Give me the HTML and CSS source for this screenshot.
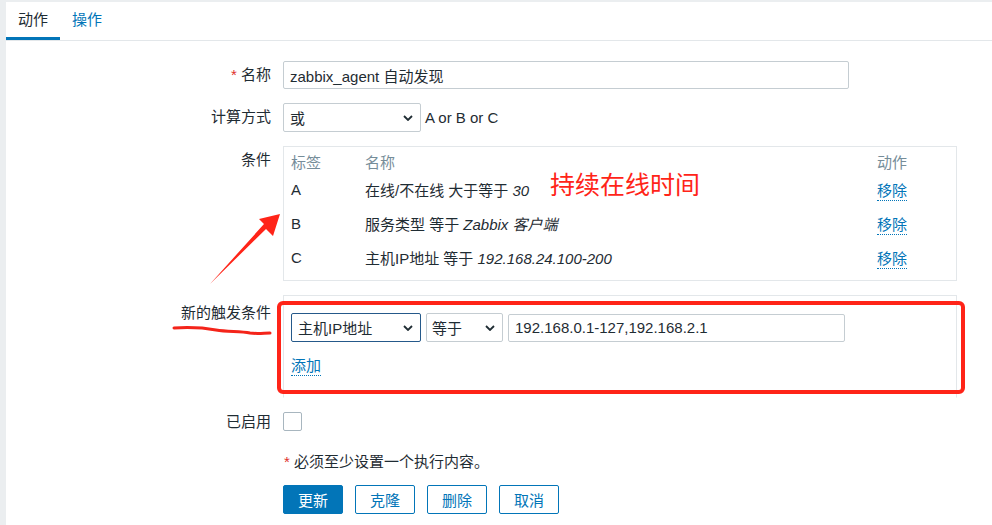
FILE: index.html
```html
<!DOCTYPE html>
<html lang="zh">
<head>
  <meta charset="UTF-8" />
  <title>自动发现动作</title>
  <link rel="stylesheet" href="styles.css">
</head>
<body>

  <div class="panel">
    <div class="tabs">
      <div class="tab active">动作</div>
      <div class="tab">操作</div>
    </div>

    <div class="form">
      <div class="label"><span class="req">*</span> 名称</div>
      <div class="field">
        <div class="input name">zabbix_agent 自动发现</div>
      </div>

      <div class="label">计算方式</div>
      <div class="field inline">
        <div class="select calc">或<svg class="chev" width="10" height="6" viewBox="0 0 10 6"><path d="M1 1l4 4 4-4" /></svg></div>
        <span class="expr">A or B or C</span>
      </div>

      <div class="label">条件</div>
      <div class="field">
        <div class="box conditions">
          <table>
            <tr class="head">
              <td class="c1">标签</td>
              <td class="c2">名称</td>
              <td class="c3">动作</td>
            </tr>
            <tr>
              <td>A</td>
              <td>在线/不在线 大于等于 <i>30</i></td>
              <td><a class="link">移除</a></td>
            </tr>
            <tr>
              <td>B</td>
              <td>服务类型 等于 <i>Zabbix 客户端</i></td>
              <td><a class="link">移除</a></td>
            </tr>
            <tr>
              <td>C</td>
              <td>主机IP地址 等于 <i>192.168.24.100-200</i></td>
              <td><a class="link">移除</a></td>
            </tr>
          </table>
        </div>
      </div>

      <div class="label new-label">新的触发条件</div>
      <div class="field">
        <div class="box new-cond">
          <div class="inline">
            <div class="select type focus">主机IP地址<svg class="chev" width="10" height="6" viewBox="0 0 10 6"><path d="M1 1l4 4 4-4" /></svg></div>
            <div class="select op">等于<svg class="chev" width="10" height="6" viewBox="0 0 10 6"><path d="M1 1l4 4 4-4" /></svg></div>
            <div class="input value">192.168.0.1-127,192.168.2.1</div>
          </div>
          <div class="add"><a class="link">添加</a></div>
        </div>
      </div>

      <div class="label mid">已启用</div>
      <div class="field">
        <div class="checkbox"></div>
      </div>

      <div class="field footer">
        <div class="note"><span class="req">*</span> 必须至少设置一个执行内容。</div>
        <div class="buttons">
          <button class="btn main">更新</button>
          <button class="btn">克隆</button>
          <button class="btn">删除</button>
          <button class="btn">取消</button>
        </div>
      </div>
    </div>
  </div>

  <!-- пометки поверх скриншота -->
  <svg class="marks" width="992" height="525" viewBox="0 0 992 525">
    <text x="550" y="194" class="note-red">持续在线时间</text>
    <path class="arrow" d="M210 284 L266 229 L273 236 L280 214 L259 219 L264 224 Z" />
    <path class="scribble" d="M174 328 C190 327 205 328 216 330 C228 332 240 331 250 333 C258 334 264 333 270 333" />
    <rect class="frame" x="279" y="303" width="684" height="89" rx="4" />
  </svg>

</body>
</html>
```

FILE: styles.css
```css
html, body {
  margin: 0;
  padding: 0;
  height: 100%;
}
body {
  position: relative;
  background: #ebeef0;
  font-family: "Liberation Sans", "Noto Sans CJK SC", sans-serif;
  font-size: 15px;
  color: #1f2c33;
  overflow: hidden;
}
.panel {
  margin: 2px 0 0 6px;
  background: #fff;
  height: calc(100% - 2px);
}
.tabs {
  display: flex;
  height: 38px;
  border-bottom: 1px solid #e3e7ea;
}
.tab {
  padding: 0 12px;
  line-height: 35px;
  border-bottom: 3px solid transparent;
  color: #0275b8;
}
.tab.active {
  color: #1f2c33;
  border-bottom-color: #0275b8;
}
.form {
  display: grid;
  grid-template-columns: 265px 674px;
  column-gap: 12px;
  row-gap: 14px;
  padding-top: 20px;
}
.label {
  text-align: right;
  line-height: 28px;
}
.label.new-label {
  padding-top: 4px;
}
.label.mid {
  align-self: center;
  line-height: 20px;
}
.req {
  color: #e0302b;
}
.inline {
  display: flex;
  align-items: center;
}
.input, .select {
  box-sizing: border-box;
  border: 1px solid #c5cdd2;
  border-radius: 2px;
  padding: 0 7px 0 6px;
  display: flex;
  align-items: center;
  background: #fff;
}
.input.name {
  width: 566px;
  height: 28px;
}
.select {
  justify-content: space-between;
  height: 29px;
}
.select.calc {
  width: 138px;
}
.select.type {
  width: 130px;
}
.select.op {
  width: 77px;
  margin-left: 5px;
  padding-left: 5px;
}
.select.focus {
  border-color: #25598a;
}
.chev {
  fill: none;
  stroke: #1f2c33;
  stroke-width: 1.8;
}
.expr {
  margin-left: 4px;
}
.input.value {
  width: 337px;
  height: 28px;
  margin-left: 5px;
}
.box {
  box-sizing: border-box;
  border: 1px solid #e3e7ea;
}
.conditions {
  height: 135px;
  padding: 3px 8px 0 7px;
}
.conditions table {
  width: 100%;
  border-collapse: collapse;
}
.conditions td {
  padding: 0;
  height: 34px;
  vertical-align: middle;
}
.conditions .head td {
  height: 22px;
  color: #768d99;
}
.conditions .c1 {
  width: 74px;
}
.conditions .c3 {
  width: 71px;
}
.link {
  color: #0275b8;
  border-bottom: 1px dotted #0275b8;
  padding-bottom: 1px;
}
.new-cond {
  height: 103px;
  padding: 17px 8px 0 7px;
  border-bottom-color: transparent;
}
.add {
  margin-top: 14px;
  line-height: 20px;
}
.checkbox {
  width: 19px;
  height: 19px;
  box-sizing: border-box;
  border: 1px solid #a8b6bf;
  border-radius: 2px;
}
.footer {
  grid-column: 2;
  margin-top: 6px;
}
.note {
  line-height: 20px;
  margin-left: 1px;
}
.buttons {
  display: flex;
  gap: 12px;
  margin-top: 13px;
}
.btn {
  width: 60px;
  height: 29px;
  box-sizing: border-box;
  border: 1px solid #0275b8;
  border-radius: 2px;
  background: #fff;
  color: #0275b8;
  font: inherit;
  padding: 0;
}
.btn.main {
  background: #0275b8;
  color: #fff;
}
.marks {
  position: absolute;
  top: 0;
  left: 0;
  pointer-events: none;
}
.note-red {
  fill: #ff2418;
  font-family: "Noto Sans CJK SC", sans-serif;
  font-size: 25px;
}
.arrow {
  fill: #ff2418;
}
.scribble {
  fill: none;
  stroke: #f4241a;
  stroke-width: 3;
  stroke-linecap: round;
}
.frame {
  fill: none;
  stroke: #ff2418;
  stroke-width: 4;
}
```
